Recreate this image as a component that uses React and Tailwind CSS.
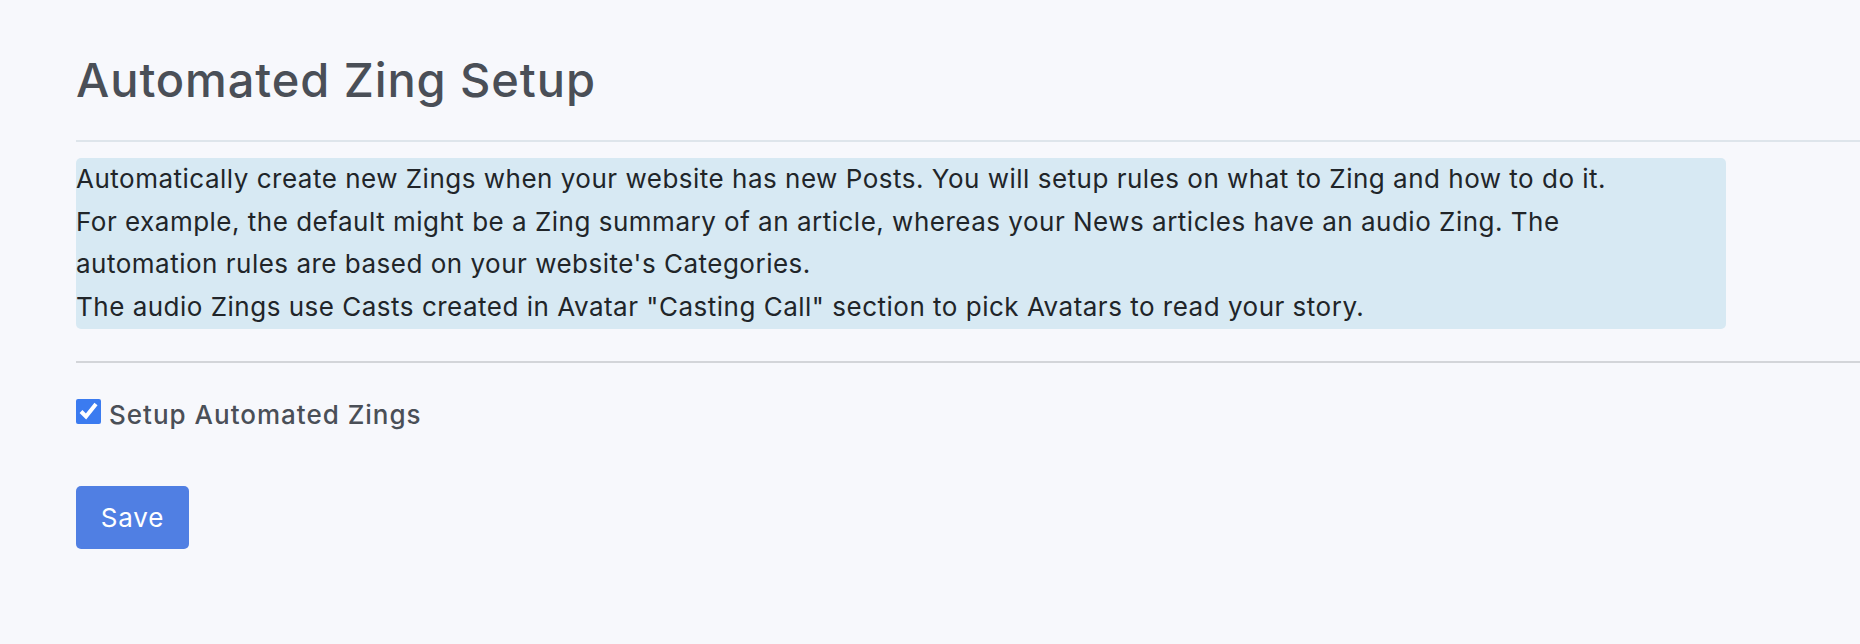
import React from 'react';

export default function App() {
  return (
    <div className="min-h-screen bg-[#f7f8fc] pl-[76px] pb-[80px] font-['Inter',sans-serif]">
      <h1 className="pt-[52px] text-[47px] leading-[56px] font-medium tracking-[0.9px] text-[#4a4f57]">
        Automated Zing Setup
      </h1>
      <hr className="mt-[32px] border-0 border-t-2 border-[#dee5eb]" />

      <div className="mt-[16px] w-[1650px] rounded-[5px] bg-[#d7e9f3] text-[26px] leading-[42.7px] tracking-[0.5px] text-[#212529]">
        Automatically create new Zings when your website has new Posts. You will setup rules on what to Zing and how to do it.
        <br />
        For example, the default might be a Zing summary of an article, whereas your News articles have an audio Zing. The
        <br />
        automation rules are based on your website's Categories.
        <br />
        The audio Zings use Casts created in Avatar "Casting Call" section to pick Avatars to read your story.
      </div>

      <hr className="mt-[32px] border-0 border-t-2 border-[#d3d5d9]" />

      <label className="mt-[36px] flex h-[26px] items-center gap-[8px]">
        <input type="checkbox" defaultChecked className="h-[25px] w-[25px] accent-[#3b7bf0]" />
        <span className="pt-[7px] text-[26px] leading-[26px] font-medium tracking-[1px] text-[#4a4f57]">Setup Automated Zings</span>
      </label>

      <button className="mt-[61px] h-[63px] w-[113px] rounded-[5px] bg-[#507fe3] text-[26px] tracking-[0.8px] text-white">
        Save
      </button>
    </div>
  );
}
